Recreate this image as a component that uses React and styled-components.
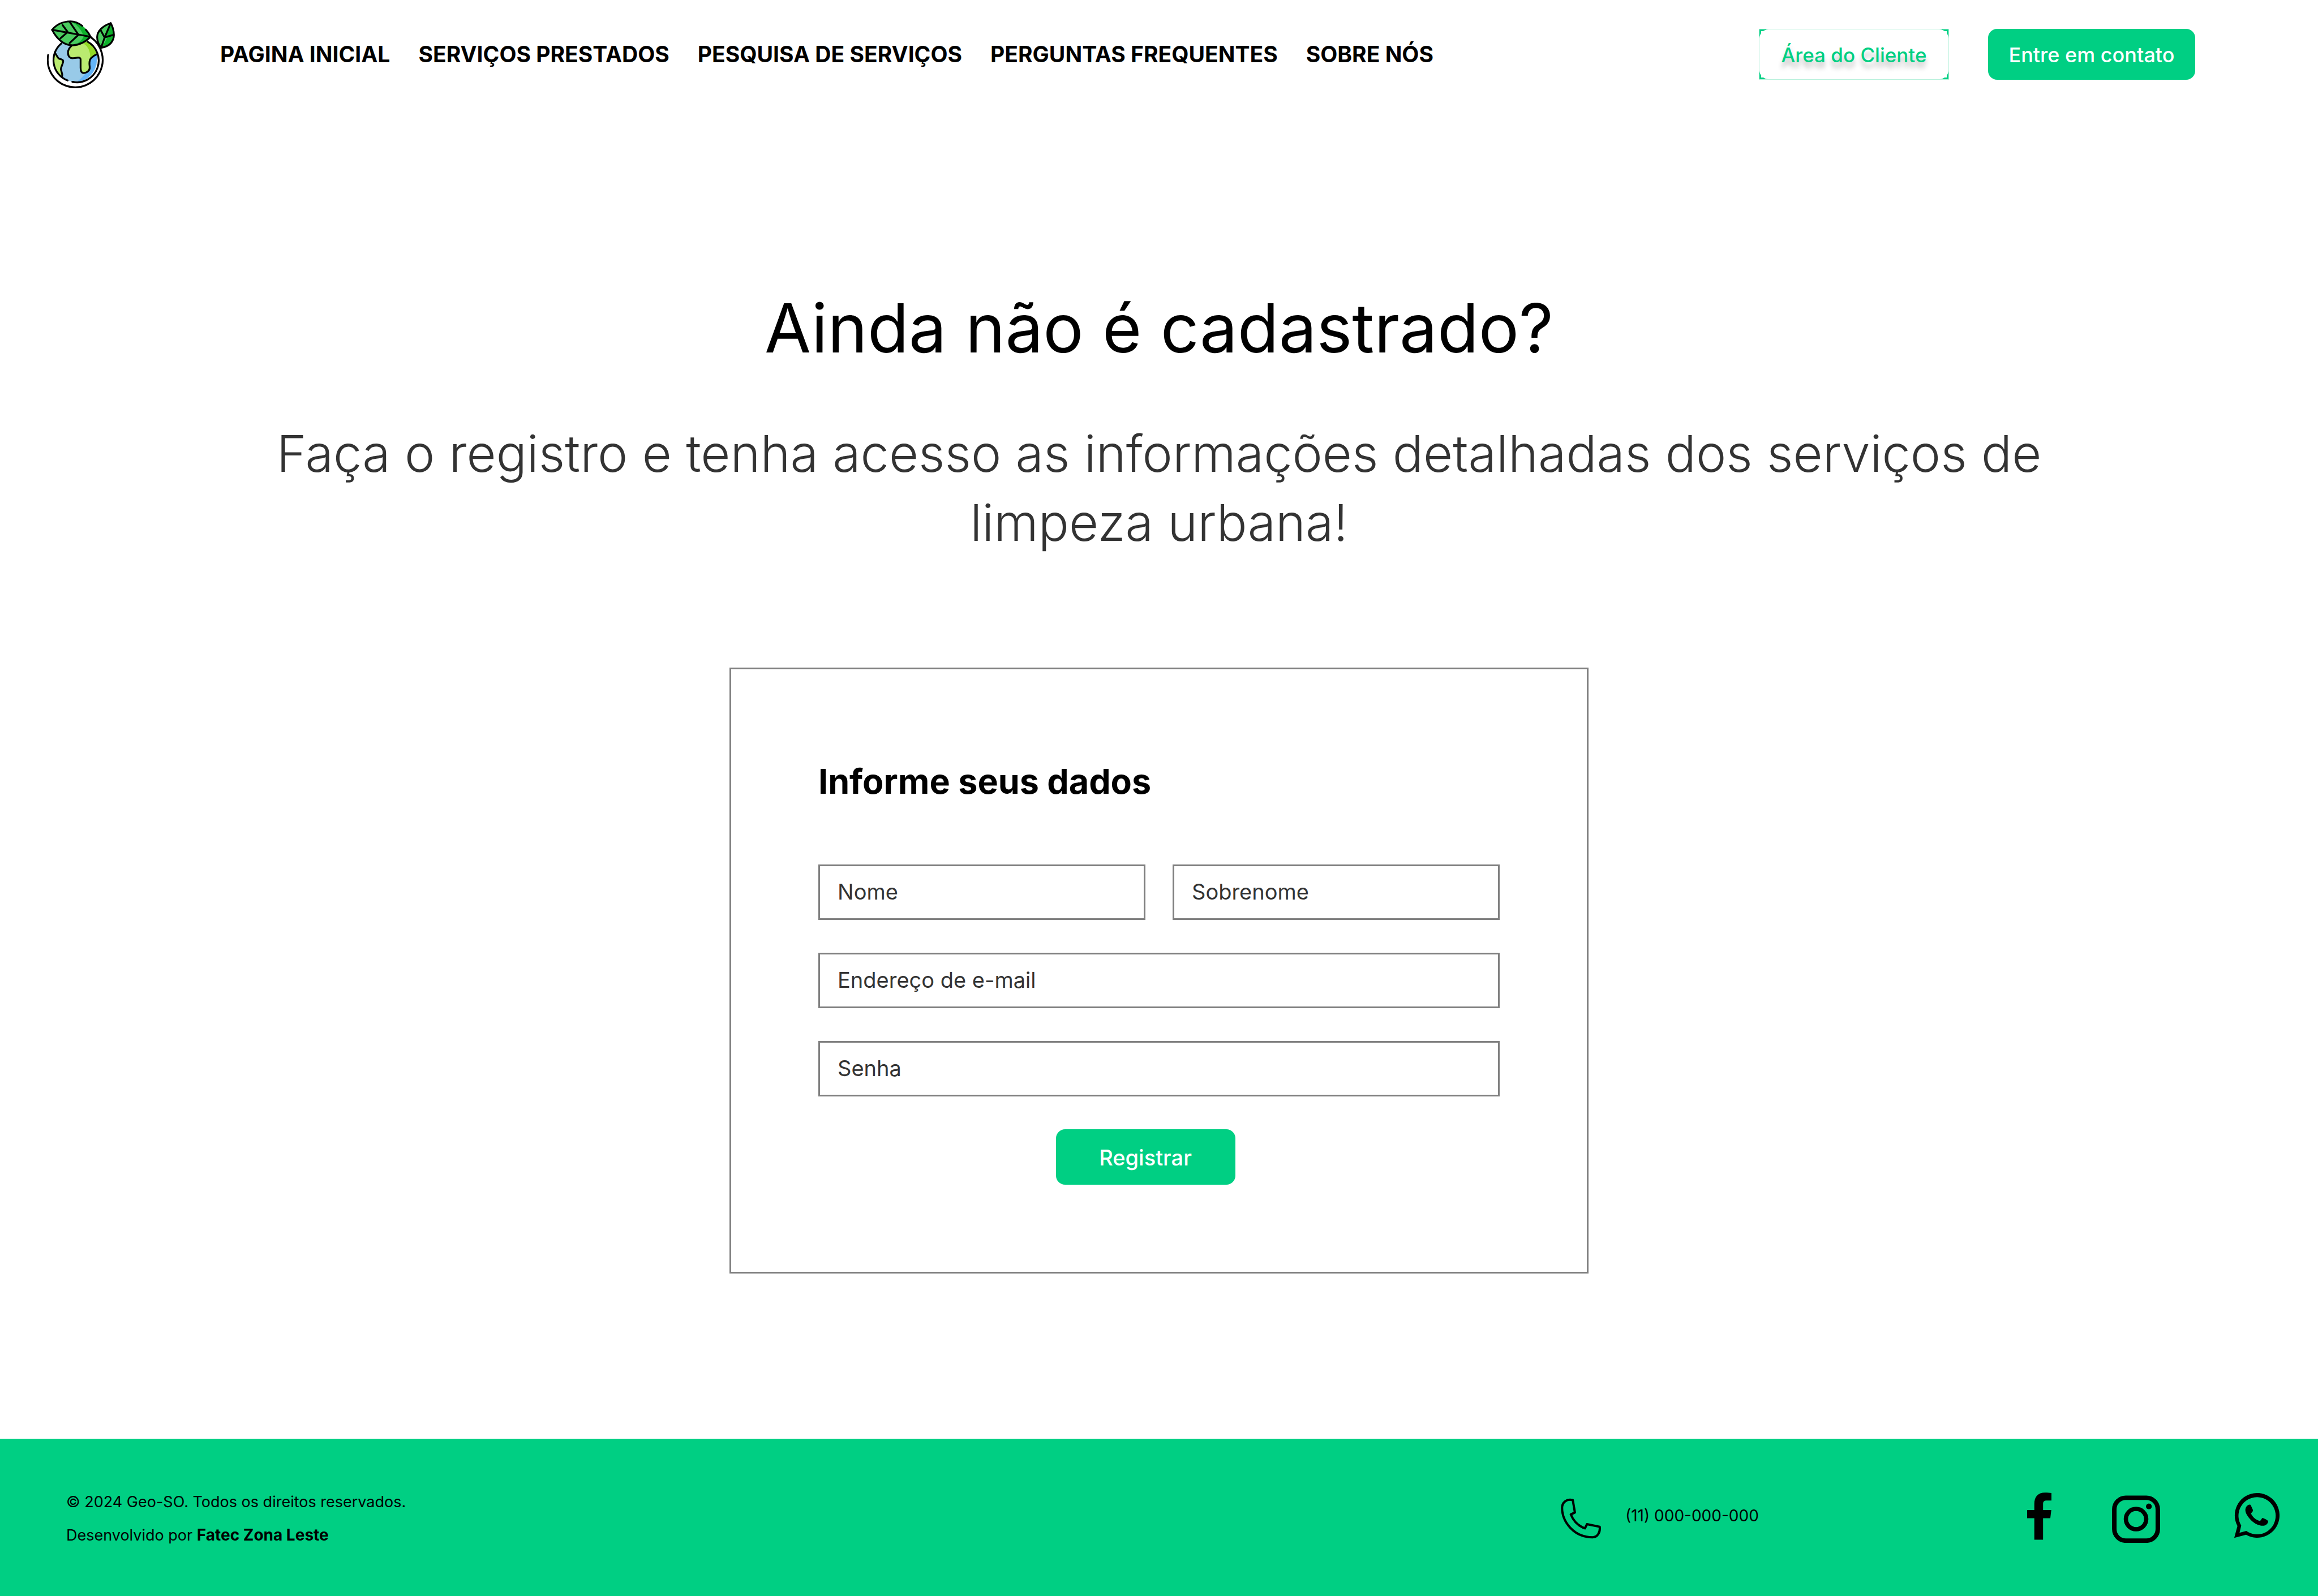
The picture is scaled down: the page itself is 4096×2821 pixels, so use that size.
import React from "react";
import styled, { createGlobalStyle } from "styled-components";

const GREEN = "#00cf83";

const GlobalStyle = createGlobalStyle`
  *, *::before, *::after { box-sizing: border-box; }
  body {
    margin: 0;
    background: #ffffff;
    color: #000000;
    font-family: Inter, "Liberation Sans", sans-serif;
  }
`;

const Page = styled.div`
  display: flex;
  flex-direction: column;
  min-height: 100vh;
`;

const Header = styled.header`
  display: flex;
  align-items: center;
  padding: 36px 217px 36px 83px;
`;

const LogoLink = styled.a`
  display: flex;
  margin-right: 186px;
`;

const Nav = styled.nav`
  display: flex;
  flex: 1;
  gap: 50px;
`;

const NavLink = styled.a`
  color: #000000;
  font-size: 39px;
  font-weight: 700;
  line-height: 48px;
  text-decoration: none;
  white-space: nowrap;
`;

const Actions = styled.div`
  display: flex;
  gap: 69px;
`;

const Button = styled.button`
  height: ${(p) => p.$height || 90}px;
  width: ${(p) => p.$width}px;
  padding: 2px 0 0;
  border: 0;
  border-radius: 16px;
  background: ${GREEN};
  color: #ffffff;
  font-family: inherit;
  font-size: ${(p) => p.$size || 36}px;
  font-weight: 500;
  line-height: 44px;
  white-space: nowrap;
`;

const CornerFrame = styled.div`
  background:
    linear-gradient(#ffffff, #ffffff) center / calc(100% - 6px) calc(100% - 6px) no-repeat,
    ${GREEN};
  border: 1px solid #b9f1dc;
`;

const ClientButton = styled(Button)`
  display: block;
  height: 88px;
  background: #ffffff;
  color: ${GREEN};
  text-shadow: 0 10px 9px rgba(0, 0, 0, 0.25);
`;

const Main = styled.main`
  display: flex;
  flex: 1;
  flex-direction: column;
  align-items: center;
  padding: 316px 60px 292px;
`;

const Title = styled.h1`
  margin: 0 0 89px;
  font-size: 119px;
  font-weight: 400;
  line-height: 144px;
  text-align: center;
`;

const Lead = styled.p`
  max-width: 3300px;
  margin: 0 0 195px;
  color: #333333;
  font-size: 90px;
  font-weight: 300;
  line-height: 122px;
  text-align: center;
`;

const Form = styled.form`
  display: grid;
  grid-template-columns: 1fr 1fr;
  gap: 58px 48px;
  width: 100%;
  max-width: 1518px;
  padding: 154px;
  border: 3px solid #808080;
`;

const FormTitle = styled.h2`
  grid-column: 1 / -1;
  margin: 0;
  padding: 2px 0 47px;
  font-size: 61px;
  font-weight: 700;
  line-height: 84px;
`;

const Field = styled.input`
  grid-column: ${(p) => (p.$wide ? "1 / -1" : "auto")};
  width: 100%;
  height: 98px;
  padding: 0 31px 2px;
  border: 3px solid #808080;
  border-radius: 0;
  background: #ffffff;
  color: #333333;
  font-family: inherit;
  font-size: 38px;
  font-weight: 400;

  &::placeholder {
    color: #333333;
    opacity: 1;
  }
`;

const SubmitRow = styled.div`
  display: flex;
  grid-column: 1 / -1;
  justify-content: center;
  padding-right: 48px;
`;

const Footer = styled.footer`
  display: grid;
  grid-template-columns: 1fr 824px 446px;
  align-items: center;
  height: 278px;
  padding: 0 68px 0 117px;
  background: ${GREEN};
  font-size: 28px;
  line-height: 58px;
`;

const Legal = styled.div`
  padding-top: 4px;
`;

const LegalLine = styled.p`
  margin: 0;
  font-size: 27px;

  strong {
    font-size: 28px;
  }
`;

const PhoneLink = styled.a`
  display: flex;
  align-items: center;
  gap: 42px;
  padding-bottom: 6px;
  color: #000000;
  text-decoration: none;
`;

const Socials = styled.div`
  display: grid;
  grid-template-columns: 150px 216px 80px;
`;

const SocialLink = styled.a`
  display: flex;
  color: #000000;
`;

function Logo() {
  return (
    <svg width="120" height="120" viewBox="103 63 410 410" fill="none" aria-hidden="true">
      <circle cx="274" cy="303" r="131" fill="#98cae8" />
      <path d="M404 268 C385 275 365 290 362 315 C364 335 358 350 350 365 C335 385 310 415 284 433 C355 430 410 370 404 268 Z" fill="#64b5f9" />
      <path d="M262 212 C240 230 228 240 230 262 C232 285 245 293 262 291 L290 288 C302 287 306 292 306 300 L306 350 C306 372 312 381 325 381 C345 380 363 365 361 345 C357 320 358 305 368 292 C380 280 392 272 404 268 C395 235 375 205 345 190 Z" fill="#baea70" />
      <path d="M322 202 L345 190 C375 205 400 240 402 268 L364 292 C366 250 352 220 322 202 Z" fill="#92d926" />
      <path d="M150 260 C162 268 165 290 178 295 C190 298 201 300 201 308 C201 325 188 340 187 358 C188 370 197 380 195 404 C145 370 133 310 150 260 Z" fill="#baea70" />
      <path d="M134 120 C170 80 200 70 245 69 C290 69 345 105 366 162 C335 195 300 212 258 214 C200 212 160 170 134 120 Z" fill="#4acc5f" />
      <path d="M245 69 C290 69 345 105 366 162 C335 195 300 212 266 213 C295 200 316 180 325 160 C310 115 275 80 245 69 Z" fill="#0db02b" />
      <path d="M488 80 C440 95 405 130 406 165 C406 190 415 210 430 228 C480 222 508 190 507 150 C506 120 500 100 488 80 Z" fill="#0db02b" />
      <path d="M488 80 C440 95 405 130 406 165 C406 190 415 210 430 228 C446 208 458 190 467 164 L452 160 Z" fill="#4acc5f" />
      <g stroke="#000000" strokeWidth="11" strokeLinecap="round" strokeLinejoin="round">
        <path d="M110 272 A166 166 0 1 0 368 165" />
        <path d="M345 190 A131 131 0 0 1 256 434" strokeLinecap="butt" />
        <path d="M228 426 A131 131 0 0 1 190 202" />
        <path d="M256 434 h8" />
        <path d="M254 214 C240 228 228 240 230 262 C232 285 245 293 262 291 L290 288 C302 287 306 292 306 300 L306 350 C306 372 312 381 325 381 C345 380 363 365 361 345 C357 320 358 305 368 292 C380 280 392 272 404 268" />
        <path d="M150 260 C162 268 165 290 178 295 C190 298 201 300 201 308 C201 325 188 340 187 358 C188 370 197 380 195 400" />
        <path d="M316 96 C295 80 275 69 245 69 C200 70 165 82 134 120 C160 170 200 212 258 214 C300 212 335 195 366 162 C360 148 350 132 337 119" />
        <path d="M134 120 L366 162" />
        <path d="M197 91 L228 133 L184 172" />
        <path d="M240 72 L293 150 L240 200" />
        <path d="M488 80 C440 95 405 130 406 165 C406 190 415 210 430 228 C480 222 508 190 507 150 C506 120 500 100 488 80 Z" />
        <path d="M488 80 L452 164 L430 228" />
        <path d="M427 122 L451 166 L505 150" />
      </g>
    </svg>
  );
}

function PhoneIcon() {
  return (
    <svg width="72" height="82" viewBox="0 -12 82 94" fill="none" aria-hidden="true">
      <path
        d="M24 3.5 L28.3 28.5 L20 32.5 C25 45 35 56 48.7 60.7 L52.7 52.3 L78.5 57.5 C80 69 74 78.8 64 78.8 C26 79 2.3 47 2.3 19 C2.3 8 12 0 24 3.5 Z"
        stroke="#000000"
        strokeWidth="4.6"
        strokeLinejoin="round"
      />
    </svg>
  );
}

function FacebookIcon() {
  return (
    <svg width="43" height="89" viewBox="0 0 49 101" fill="currentColor" aria-hidden="true">
      <path d="M14.5 95 V51.7 H0 V35 H14.5 V23 C14.5 8 22 0 36 0 C41 0 46 .3 49 .8 V16 H40 C34 16 32.1 18 32.1 23 V35 H48.7 L46.7 51.7 H32.1 V95 Z" />
    </svg>
  );
}

function InstagramIcon() {
  return (
    <svg width="85" height="89" viewBox="0 -6 96.4 101" fill="none" aria-hidden="true">
      <rect x="4.6" y="4.6" width="87.2" height="86" rx="23" stroke="currentColor" strokeWidth="9" />
      <circle cx="48.2" cy="47.4" r="20.4" stroke="currentColor" strokeWidth="8.6" />
      <circle cx="73.9" cy="22" r="5.8" fill="currentColor" />
    </svg>
  );
}

function WhatsappIcon() {
  return (
    <svg width="81" height="89" viewBox="0 0 92 101" fill="currentColor" aria-hidden="true">
      <path
        fillRule="evenodd"
        d="M0 91.7 L6.5 67.5 A45.5 45.5 0 1 1 24 85.4 Z M10.7 81.2 L24.5 77.5 A37.8 37.8 0 1 0 14.2 66.5 Z"
      />
      <path d="M28 25 C30 24 33 23.5 34 26 L38 35 C38.6 38 35 40.5 34 42.3 C38 50 44 55.5 52 57.3 C54.5 56 55.5 52 57.4 51 C59 51 68.9 56 68.9 57.5 C69 61 67 64 63 66 C58 68 52 66.5 47 64.5 C37 60 30 52 25 43.5 C21 36 22 29 28 25 Z" />
    </svg>
  );
}

const LINKS = [
  "PAGINA INICIAL",
  "SERVIÇOS PRESTADOS",
  "PESQUISA DE SERVIÇOS",
  "PERGUNTAS FREQUENTES",
  "SOBRE NÓS",
];

export default function App() {
  return (
    <Page>
      <GlobalStyle />
      <Header>
        <LogoLink href="#" aria-label="Geo-SO">
          <Logo />
        </LogoLink>
        <Nav>
          {LINKS.map((label) => (
            <NavLink key={label} href="#">
              {label}
            </NavLink>
          ))}
        </Nav>
        <Actions>
          <CornerFrame>
            <ClientButton type="button" $width={334} $size={35}>
              Área do Cliente
            </ClientButton>
          </CornerFrame>
          <Button type="button" $width={366}>
            Entre em contato
          </Button>
        </Actions>
      </Header>

      <Main>
        <Title>Ainda não é cadastrado?</Title>
        <Lead>
          Faça o registro e tenha acesso as informações detalhadas dos serviços de limpeza urbana!
        </Lead>
        <Form onSubmit={(e) => e.preventDefault()}>
          <FormTitle>Informe seus dados</FormTitle>
          <Field type="text" placeholder="Nome" aria-label="Nome" />
          <Field type="text" placeholder="Sobrenome" aria-label="Sobrenome" />
          <Field $wide type="email" placeholder="Endereço de e-mail" aria-label="Endereço de e-mail" />
          <Field $wide type="password" placeholder="Senha" aria-label="Senha" />
          <SubmitRow>
            <Button type="submit" $width={317} $height={98} $size={38}>
              Registrar
            </Button>
          </SubmitRow>
        </Form>
      </Main>

      <Footer>
        <Legal>
          <LegalLine>© 2024 Geo-SO. Todos os direitos reservados.</LegalLine>
          <LegalLine>
            Desenvolvido por <strong>Fatec Zona Leste</strong>
          </LegalLine>
        </Legal>
        <PhoneLink href="tel:11000000000">
          <PhoneIcon />
          (11) 000-000-000
        </PhoneLink>
        <Socials>
          <SocialLink href="#" aria-label="Facebook">
            <FacebookIcon />
          </SocialLink>
          <SocialLink href="#" aria-label="Instagram">
            <InstagramIcon />
          </SocialLink>
          <SocialLink href="#" aria-label="WhatsApp">
            <WhatsappIcon />
          </SocialLink>
        </Socials>
      </Footer>
    </Page>
  );
}
